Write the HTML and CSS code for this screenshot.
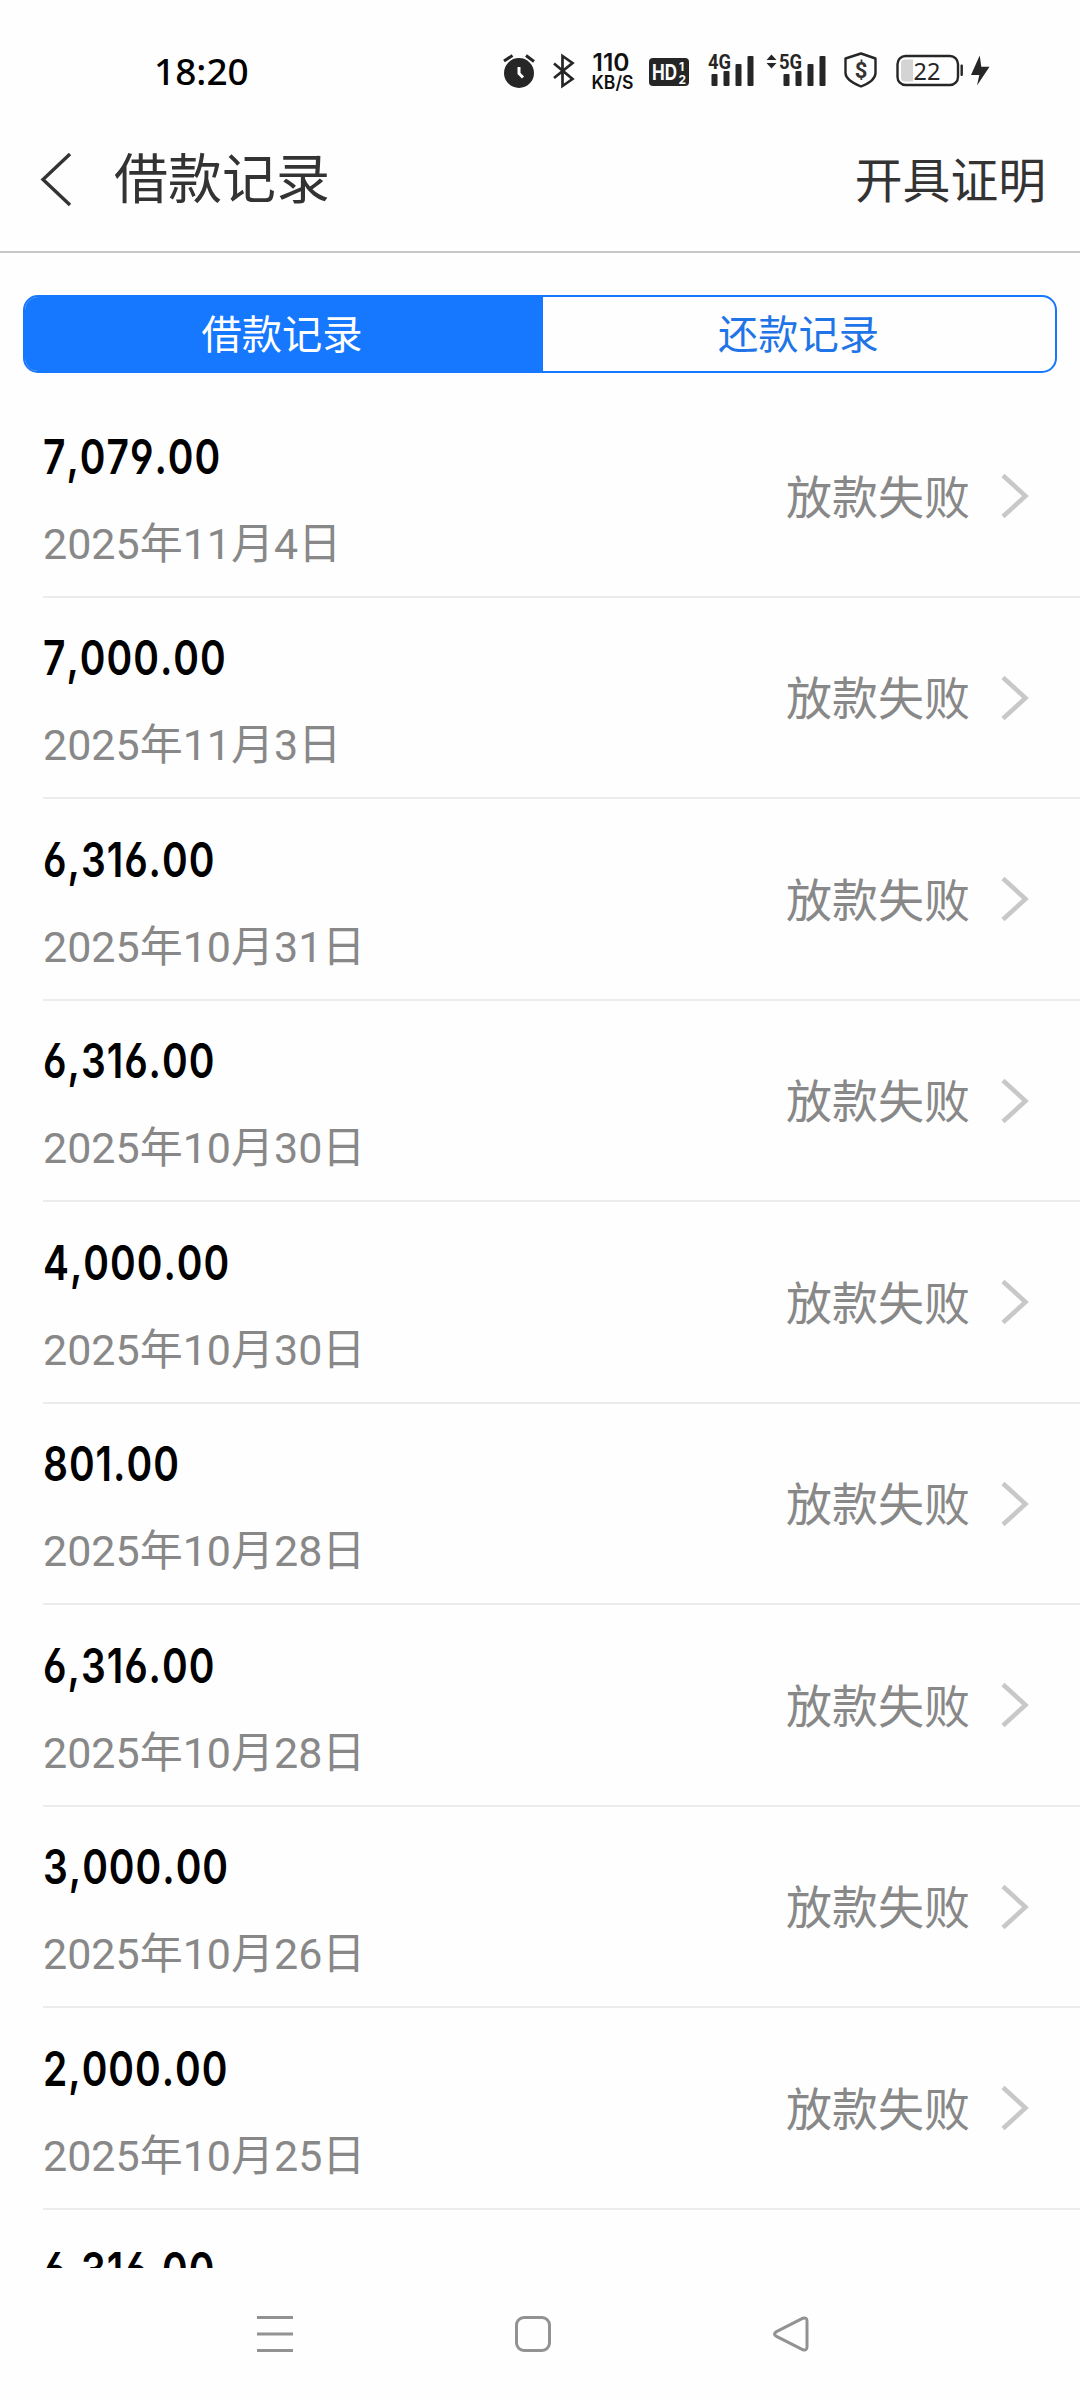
FILE: index.html
```html
<!DOCTYPE html>
<html lang="zh-CN">
<head>
<meta charset="utf-8">
<title>借款记录</title>
<link rel="stylesheet" href="styles.css">
</head>
<body>
<div class="screen">
  <div class="statusbar">
    <span class="clock">18:20</span>
    <svg class="status-icons" width="500" height="50" viewBox="500 48 500 50">
      <g fill="#262626">
        <circle cx="519" cy="74" r="15"/>
        <path d="M504 62l8.500-5.500M534 62.500l-8-6" stroke="#262626" stroke-width="3"/>
        <path d="M519 68v6.500l4 4" fill="none" stroke="#fff" stroke-width="3"/>
        <path d="M554 64.500L572.500 80l-10 7V57l10 7L554 79" fill="none" stroke="#262626" stroke-width="2.700"/>
        <rect x="649" y="59" width="40" height="28" rx="4"/>
      </g>
      <g class="st">
        <text x="592.500" y="71.500" font-size="24" textLength="37" lengthAdjust="spacingAndGlyphs">110</text>
        <text x="591.500" y="90" font-size="18" textLength="42" lengthAdjust="spacingAndGlyphs">KB/S</text>
        <text class="inv" x="652" y="81" font-size="21" textLength="25" lengthAdjust="spacingAndGlyphs">HD</text>
        <text class="inv" x="679" y="72" font-size="12">1</text>
        <text class="inv" x="678.500" y="84.500" font-size="12">2</text>
        <text class="net" x="708" y="70" font-size="19.500" textLength="23" lengthAdjust="spacingAndGlyphs">4G</text>
        <text class="net" x="779" y="70" font-size="19.500" textLength="23" lengthAdjust="spacingAndGlyphs">5G</text>
      </g>
      <g fill="#262626">
        <rect x="711.500" y="75" width="6" height="12" rx="1"/><rect x="723.500" y="72" width="6" height="15" rx="1"/><rect x="735.500" y="65" width="6" height="22" rx="1"/><rect x="747.500" y="57" width="6" height="30" rx="1"/>
        <rect x="783.500" y="75" width="6" height="12" rx="1"/><rect x="795.500" y="72" width="6" height="15" rx="1"/><rect x="807.500" y="65" width="6" height="22" rx="1"/><rect x="819.500" y="57" width="6" height="30" rx="1"/>
        <path d="M766.500 61l5-5.500 5 5.500zM766.500 64h10l-5 5.500z"/>
        <path d="M971 76l8.700-19.500 1.600 11.200h8.200L977 86.500l2.300-10.500z"/>
        <rect x="960.500" y="65.500" width="2.400" height="11.500" rx="1"/>
      </g>
      <path d="M861 54.500L875.500 59.500V74c0 6-7 10.500-14.500 13.500C853.500 84.500 845.500 80 845.500 74V59.500z" fill="none" stroke="#262626" stroke-width="2.400" stroke-linejoin="round"/>
      <text class="dollar" x="861" y="79" font-size="22" text-anchor="middle">$</text>
      <rect x="897.500" y="57" width="60.500" height="29" rx="8" fill="none" stroke="#262626" stroke-width="2.400"/>
      <path d="M913 60.500v22h-8a4 4 0 0 1-4-4v-14a4 4 0 0 1 4-4z" fill="#d4d4d4"/>
      <text class="level" x="913.500" y="80.500" font-size="23.500" textLength="27">22</text>
    </svg>
  </div>
  <header class="navbar">
    <svg class="back" width="32" height="54" viewBox="0 0 32 54"><path d="M30 1L3 26.500l27 25.500" fill="none" stroke="#333" stroke-width="3.400"/></svg>
    <h1 class="title">借款记录</h1>
    <span class="action">开具证明</span>
  </header>
  <div class="tabs">
    <div class="tab active">借款记录</div>
    <div class="tab">还款记录</div>
  </div>
  <main class="list">
    <div class="row"><div class="info"><div class="amount">7,079.00</div><div class="date">2025年11月4日</div></div><span class="state">放款失败</span><svg class="more" width="28" height="46" viewBox="0 0 28 46"><path d="M2 2.500L24.500 23 2 43.500"/></svg></div>
    <div class="row"><div class="info"><div class="amount">7,000.00</div><div class="date">2025年11月3日</div></div><span class="state">放款失败</span><svg class="more" width="28" height="46" viewBox="0 0 28 46"><path d="M2 2.500L24.500 23 2 43.500"/></svg></div>
    <div class="row"><div class="info"><div class="amount">6,316.00</div><div class="date">2025年10月31日</div></div><span class="state">放款失败</span><svg class="more" width="28" height="46" viewBox="0 0 28 46"><path d="M2 2.500L24.500 23 2 43.500"/></svg></div>
    <div class="row"><div class="info"><div class="amount">6,316.00</div><div class="date">2025年10月30日</div></div><span class="state">放款失败</span><svg class="more" width="28" height="46" viewBox="0 0 28 46"><path d="M2 2.500L24.500 23 2 43.500"/></svg></div>
    <div class="row"><div class="info"><div class="amount">4,000.00</div><div class="date">2025年10月30日</div></div><span class="state">放款失败</span><svg class="more" width="28" height="46" viewBox="0 0 28 46"><path d="M2 2.500L24.500 23 2 43.500"/></svg></div>
    <div class="row"><div class="info"><div class="amount">801.00</div><div class="date">2025年10月28日</div></div><span class="state">放款失败</span><svg class="more" width="28" height="46" viewBox="0 0 28 46"><path d="M2 2.500L24.500 23 2 43.500"/></svg></div>
    <div class="row"><div class="info"><div class="amount">6,316.00</div><div class="date">2025年10月28日</div></div><span class="state">放款失败</span><svg class="more" width="28" height="46" viewBox="0 0 28 46"><path d="M2 2.500L24.500 23 2 43.500"/></svg></div>
    <div class="row"><div class="info"><div class="amount">3,000.00</div><div class="date">2025年10月26日</div></div><span class="state">放款失败</span><svg class="more" width="28" height="46" viewBox="0 0 28 46"><path d="M2 2.500L24.500 23 2 43.500"/></svg></div>
    <div class="row"><div class="info"><div class="amount">2,000.00</div><div class="date">2025年10月25日</div></div><span class="state">放款失败</span><svg class="more" width="28" height="46" viewBox="0 0 28 46"><path d="M2 2.500L24.500 23 2 43.500"/></svg></div>
    <div class="row"><div class="info"><div class="amount">6,316.00</div></div></div>
  </main>
  <nav class="sysnav">
    <svg width="36" height="38" viewBox="0 0 36 38"><path d="M0 2.500h36M0 19h36M0 35.500h36"/></svg>
    <svg width="36" height="38" viewBox="0 0 36 38"><rect x="1.500" y="2.500" width="33" height="33" rx="7.500"/></svg>
    <svg width="36" height="38" viewBox="0 0 36 38"><path d="M30 3.200L3.500 16.600q-4 2.400 0 4.800L30 34.800q4 1.200 4-3V6.200q0-4.200-4-3z"/></svg>
  </nav>
</div>
</body>
</html>
```

FILE: styles.css
```css
* { box-sizing: border-box; }
body { margin: 0; background: #fefefe; font-family: Roboto, "Noto Sans CJK SC", sans-serif; }
.screen { width: 1080px; height: 2400px; display: flex; flex-direction: column; overflow: hidden; }
.statusbar { height: 144px; flex: none; display: flex; align-items: center; padding: 0 80px 0 154px; }
.clock { font: 500 37px/50px "Noto Sans", sans-serif; color: #000; flex: 1; margin-top: -3px; }
.status-icons { flex: none; margin-top: 0; }
.st text { font-family: Inter, sans-serif; font-weight: 600; fill: #111; }
.st .inv { fill: #fff; font-weight: 700; }
.st .net { fill: #262626; font-weight: 700; font-family: Roboto, sans-serif; }
.dollar { font-family: Roboto, sans-serif; font-weight: 700; fill: #333; }
.level { font-family: "Noto Sans", sans-serif; fill: #262626; }
.navbar { height: 109px; flex: none; display: flex; align-items: center; padding: 0 34px 0 40px; border-bottom: 2px solid #c8c8c8; color: #333; font-family: "Noto Sans CJK SC", sans-serif; }
.back { margin-top: -36px; }
.title { margin: -44px 0 0 42px; font-size: 54px; line-height: 72px; font-weight: 400; flex: 1; }
.action { margin-top: -40px; font-size: 47.800px; line-height: 72px; }
.tabs { flex: none; height: 78px; margin: 42px 23px 0; display: flex; border: 2px solid #1677ff; border-radius: 15px; overflow: hidden; font: 40.300px/70px "Noto Sans CJK SC", sans-serif; text-align: center; color: #1f74e8; }
.tab { flex: 1; padding-right: 1px; }
.tab.active { background: #1677ff; color: #fff; flex: none; width: 518px; padding-right: 4px; }
.list { flex: none; height: 1872px; margin-top: 23px; padding-left: 43px; overflow: hidden; }
.row { height: 201.500px; display: flex; align-items: center; border-bottom: 2px solid #ececec; padding-right: 51px; }
.info { flex: 1; height: 201px; padding-top: 30.500px; }
.amount { font: 600 48px/62px Inter, sans-serif; font-feature-settings: "cv03", "cv04"; font-kerning: none; letter-spacing: 1.200px; color: #000; transform: scaleX(.812); transform-origin: 0 0; }
.date { font-size: 43px; line-height: 62px; margin-top: 25px; color: #888; }
.state { font: 46px/64px "Noto Sans CJK SC", sans-serif; color: #888; margin: -4px 31px 0 0; }
.more { margin-top: 1px; }
.more path { fill: none; stroke: #c8c8c8; stroke-width: 4.500; }
.sysnav { flex: 1; display: flex; align-items: center; padding-left: 257px; gap: 222px; }
.sysnav svg { fill: none; stroke: #929292; stroke-width: 3; }
```
